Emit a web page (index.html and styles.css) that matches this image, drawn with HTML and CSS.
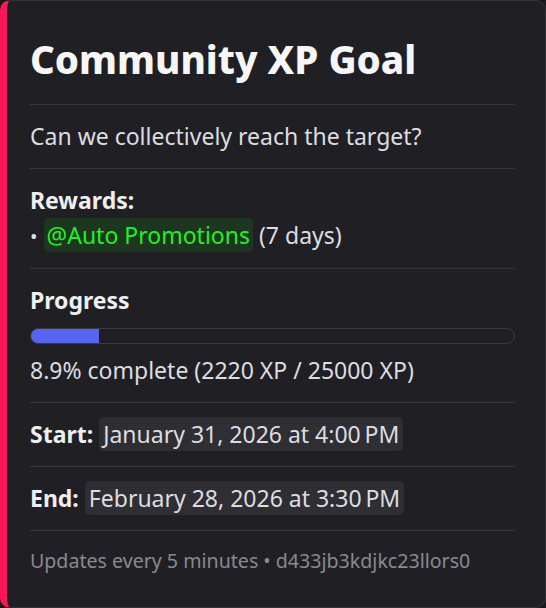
FILE: index.html
```html
<!DOCTYPE html>
<html>
<head>
<title>Community XP Goal</title>
<link rel="stylesheet" href="styles.css">
</head>
<body>
	<div class="embed">
		<h1 class="title">Community XP Goal</h1>
		<hr class="sep">
		<p class="text">Can we collectively reach the target?</p>
		<hr class="sep">
		<div class="block">
			<p class="text"><strong>Rewards:</strong></p>
			<p class="text"><span class="dot">•</span> <span class="mention">@Auto Promotions</span> (7 days)</p>
		</div>
		<hr class="sep">
		<div class="block">
			<p class="text"><strong>Progress</strong></p>
			<div class="bar"><div class="fill" style="width: 14%"></div></div>
			<p class="text">8.9% complete (2220 XP / 25000 XP)</p>
		</div>
		<hr class="sep">
		<p class="text"><strong>Start:</strong> <span class="stamp">January 31, 2026 at 4:00&#8239;PM</span></p>
		<hr class="sep">
		<p class="text"><strong>End:</strong> <span class="stamp">February 28, 2026 at 3:30&#8239;PM</span></p>
		<hr class="sep">
		<p class="footer">Updates every 5 minutes • d433jb3kdjkc23llors0</p>
	</div>
</body>
</html>
```
FILE: styles.css
```css
* {
	box-sizing: border-box;
}
html, body {
	margin: 0;
	height: 100%;
}
body {
	background-color: #18181b;
	font-family: "Noto Sans", "Lato", sans-serif;
	color: #dcdde1;
}
.embed {
	height: 608px;
	width: 546px;
	background-color: #202024;
	border: 1px solid #333338;
	border-left: 7px solid #fd1657;
	border-radius: 10px;
	padding: 32px 30px 0 23px;
	display: flex;
	flex-direction: column;
	gap: 14px;
}
.title {
	margin: 0 0 5px 0;
	font-size: 38.5px;
	line-height: 52px;
	font-weight: 800;
	color: #f6f6f7;
}
.sep {
	margin: 0;
	border: none;
	height: 1px;
	background-color: #35353b;
}
.text {
	margin: 0;
	font-size: 23px;
	line-height: 35px;
}
.text strong {
	font-weight: 700;
	color: #eeeff1;
}
.dot {
	font-size: 20px;
}
.mention {
	display: inline-block;
	line-height: 34px;
	padding: 0 3px;
	border-radius: 5px;
	background-color: #1d3620;
	color: #1cf51c;
	vertical-align: top;
}
.stamp {
	display: inline-block;
	line-height: 34px;
	padding: 0 4px;
	border-radius: 5px;
	background-color: #2e2e33;
	vertical-align: top;
}
.bar {
	margin: 10px 0 9px 0;
	height: 16px;
	border: 1px solid #3a3a40;
	border-radius: 8px;
	overflow: hidden;
}
.fill {
	height: 100%;
	background-color: #5865f2;
}
.footer {
	margin: 0;
	font-size: 19.6px;
	line-height: 32px;
	color: #898990;
}
```
